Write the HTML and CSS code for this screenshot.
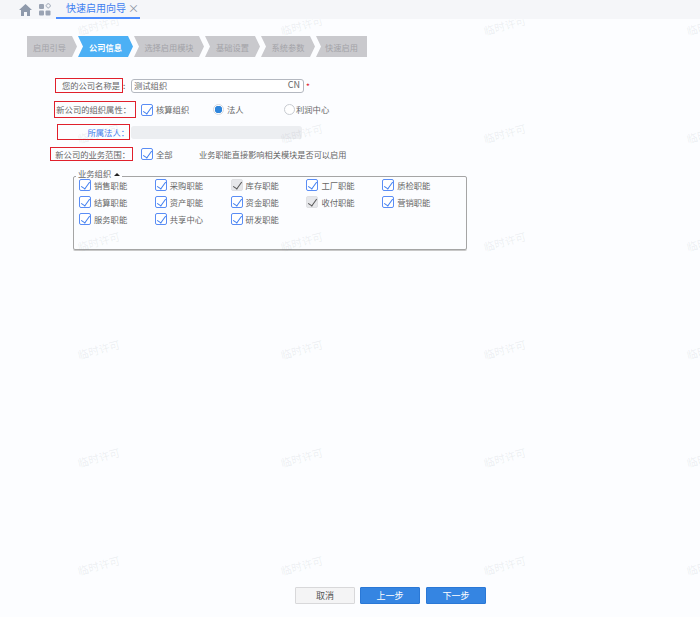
FILE: index.html
```html
<!DOCTYPE html>
<html lang="zh-CN">
<head>
    <meta charset="UTF-8">
    <meta name="viewport" content="width=device-width, initial-scale=1.0">
    <title>快速启用向导</title>
    <link rel="stylesheet" href="styles.css">
</head>
<body>
    <div class="topbar">
        <svg class="icon-home" width="13" height="12" viewBox="0 0 13 12"><path d="M6.5 0 0 6h2v6h3V8h3v4h3V6h2z" fill="#8e99ab"/></svg>
        <svg class="icon-apps" width="12" height="13" viewBox="0 0 12 13">
            <rect x="0" y="1" width="5" height="5" rx="1" fill="#9aa3b3"/>
            <rect x="7.5" y="1" width="3.5" height="3.5" rx="0.5" fill="none" stroke="#b4bbc7" transform="rotate(45 9.2 2.8)"/>
            <rect x="0" y="7.5" width="5" height="5" rx="1" fill="#9aa3b3"/>
            <rect x="6.5" y="7.5" width="5" height="5" rx="1" fill="#9aa3b3"/>
        </svg>
        <div class="tab">
            <span>快速启用向导</span>
            <span class="tab-close">×</span>
        </div>
    </div>

    <div class="steps">
        <div class="step step-first">启用引导</div>
        <div class="step step-active">公司信息</div>
        <div class="step step-wide">选择启用模块</div>
        <div class="step">基础设置</div>
        <div class="step step-fifth">系统参数</div>
        <div class="step step-last">快速启用</div>
    </div>

    <div class="form">
        <div class="row row-name">
            <label class="mark mark-name">您的公司名称是</label>
            <span class="colon">:</span>
            <div class="input-name"><span>测试组织</span><span class="lang">CN</span></div>
            <span class="required">*</span>
        </div>
        <div class="row row-attr">
            <label class="mark mark-attr">新公司的组织属性：</label>
            <span class="check"></span><span class="opt opt-calc">核算组织</span>
            <span class="radio radio-on"></span><span class="opt opt-legal">法人</span>
            <span class="radio"></span><span class="opt opt-profit">利润中心</span>
        </div>
        <div class="row row-legal">
            <label class="mark mark-legal">所属法人：</label>
            <div class="input-legal"></div>
        </div>
        <div class="row row-scope">
            <label class="mark mark-scope">新公司的业务范围：</label>
            <span class="check"></span><span class="opt opt-all">全部</span>
            <span class="hint">业务职能直接影响相关模块是否可以启用</span>
        </div>

        <fieldset class="group">
            <legend>业务组织 <span class="caret"></span></legend>
            <div class="group-grid">
                <div class="item"><span class="check"></span>销售职能</div>
                <div class="item"><span class="check"></span>采购职能</div>
                <div class="item"><span class="check check-off"></span>库存职能</div>
                <div class="item"><span class="check"></span>工厂职能</div>
                <div class="item"><span class="check"></span>质检职能</div>
                <div class="item"><span class="check"></span>结算职能</div>
                <div class="item"><span class="check"></span>资产职能</div>
                <div class="item"><span class="check"></span>资金职能</div>
                <div class="item"><span class="check check-off"></span>收付职能</div>
                <div class="item"><span class="check"></span>营销职能</div>
                <div class="item"><span class="check"></span>服务职能</div>
                <div class="item"><span class="check"></span>共享中心</div>
                <div class="item"><span class="check"></span>研发职能</div>
            </div>
        </fieldset>
    </div>

    <div class="footer">
        <button class="btn btn-cancel">取消</button>
        <button class="btn btn-blue">上一步</button>
        <button class="btn btn-blue">下一步</button>
    </div>

    <div class="watermarks">
        <span>临时许可</span><span>临时许可</span><span>临时许可</span><span>临时许可</span>
        <span>临时许可</span><span>临时许可</span><span>临时许可</span><span>临时许可</span>
        <span>临时许可</span><span>临时许可</span><span>临时许可</span><span>临时许可</span>
        <span>临时许可</span><span>临时许可</span><span>临时许可</span><span>临时许可</span>
        <span>临时许可</span><span>临时许可</span><span>临时许可</span><span>临时许可</span>
        <span>临时许可</span><span>临时许可</span><span>临时许可</span><span>临时许可</span>
    </div>
</body>
</html>
```

FILE: styles.css
```css
* {
    box-sizing: border-box;
}

html, body {
    height: 100%;
}

body {
    margin: 0;
    position: relative;
    overflow: hidden;
    display: flex;
    flex-direction: column;
    background-color: #fcfdff;
    font-family: "Noto Sans CJK SC", "Noto Sans", sans-serif;
    font-size: 8.3px;
    line-height: 12px;
    color: #666;
}

/* top bar */
.topbar {
    height: 19px;
    flex: none;
    position: relative;
    z-index: 2;
    display: flex;
    align-items: flex-start;
    background-color: #f5f6f9;
}

.icon-home {
    margin: 4px 0 0 19px;
}

.icon-apps {
    margin: 3px 0 0 7px;
}

.tab {
    width: 84px;
    height: 19px;
    margin-left: 5px;
    padding: 0 0 1px 10px;
    display: flex;
    align-items: center;
    gap: 2px;
    border-bottom: 2px solid #4d8dff;
    color: #3f7ef0;
    font-size: 10px;
}

.tab-close {
    color: #8a93a3;
    font-size: 11px;
}

/* steps */
.steps {
    flex: none;
    display: flex;
    gap: 1px;
    margin: 17px 0 0 27px;
}

.step {
    width: 55px;
    height: 21px;
    display: flex;
    align-items: center;
    justify-content: center;
    background-color: #c9c9cd;
    color: #a3a3a8;
    font-size: 8.2px;
    clip-path: polygon(0 0, calc(100% - 5px) 0, 100% 50%, calc(100% - 5px) 100%, 0 100%, 5px 50%);
}

.step-first {
    width: 50px;
    padding-right: 5px;
    clip-path: polygon(0 0, calc(100% - 5px) 0, 100% 50%, calc(100% - 5px) 100%, 0 100%);
}

.step-active {
    background-color: #4cb0f5;
    color: #fff;
    font-weight: bold;
}

.step-wide {
    width: 70px;
}

.step-fifth {
    width: 54px;
}

.step-last {
    width: 51px;
    clip-path: polygon(0 0, 100% 0, 100% 100%, 0 100%, 5px 50%);
}

/* form */
.form {
    flex: 1;
    padding-top: 21px;
}

.row {
    display: flex;
    align-items: center;
}

.mark {
    height: 15px;
    padding-bottom: 1px;
    display: flex;
    align-items: center;
    justify-content: flex-end;
    flex: none;
    border: 1.5px solid #e0202c;
    white-space: nowrap;
}

.row-name {
    height: 15px;
    padding-left: 55px;
}

.mark-name {
    width: 68px;
    padding-right: 2px;
}

.colon {
    width: 8px;
    flex: none;
    padding-bottom: 1px;
}

.input-name {
    width: 173px;
    height: 14px;
    padding: 0 3px 1px 2px;
    display: flex;
    justify-content: space-between;
    align-items: center;
    background-color: #fff;
    border: 1px solid #b4b8c0;
    border-radius: 3px;
}

.lang {
    font-size: 9px;
}

.required {
    margin-left: 2px;
    color: #e0202c;
}

.row-attr {
    height: 17px;
    margin-top: 8px;
    padding-left: 54px;
}

.mark-attr {
    width: 82px;
    height: 17px;
    padding-right: 4px;
}

.row-attr .check {
    margin-left: 5px;
}

.opt {
    margin-left: 3px;
    padding-bottom: 1px;
    white-space: nowrap;
}

.opt-calc {
    width: 57px;
}

.opt-legal {
    width: 57px;
}

.opt-profit {
    margin-left: 1px;
}

.row-legal {
    height: 16px;
    margin-top: 6px;
    padding-left: 57px;
}

.mark-legal {
    width: 73px;
    height: 16px;
    color: #3f7ef0;
}

.input-legal {
    width: 171px;
    height: 13px;
    margin-left: 1px;
    background-color: #eceef1;
    border-radius: 3px;
}

.row-scope {
    height: 14px;
    margin-top: 7px;
    padding-left: 50px;
}

.mark-scope {
    width: 83px;
    height: 14px;
    padding-right: 2px;
}

.row-scope .check {
    margin-left: 8px;
}

.opt-all {
    width: 43px;
}

.hint {
    padding-bottom: 1px;
    font-size: 8.2px;
    white-space: nowrap;
}

.check {
    width: 12px;
    height: 12px;
    flex: none;
    position: relative;
    display: inline-block;
    background-color: #fff;
    border: 1px solid #5a8df5;
    border-radius: 2px;
}

.check::after {
    content: "";
    position: absolute;
    left: 3px;
    top: 0;
    width: 4px;
    height: 8px;
    border-right: 1px solid #3f7ef0;
    border-bottom: 1px solid #3f7ef0;
    transform: rotate(35deg);
}

.check-off {
    background-color: #e6e7ea;
    border-color: #e0e1e4;
}

.check-off::after {
    border-color: #555;
}

.radio {
    width: 11px;
    height: 11px;
    flex: none;
    background-color: #fff;
    border: 1px solid #c8ccd2;
    border-radius: 50%;
}

.radio-on {
    border-color: #d5d9df;
    background: radial-gradient(circle, #2f86dc 0, #2f86dc 3.5px, #fff 4px);
}

/* business group */
.group {
    width: 394px;
    height: 82px;
    margin: 7px 0 0 73px;
    padding: 0 0 0 5px;
    border: 1px solid #a5a5a5;
    border-radius: 2px;
    box-shadow: 0 1px 0 #c8c8c8;
}

.group legend {
    padding: 0 2px 6px;
    margin-left: -3px;
    font-size: 8.3px;
    line-height: 10px;
}

.caret {
    display: inline-block;
    margin-left: 1px;
    vertical-align: 1px;
    border-left: 3px solid transparent;
    border-right: 3px solid transparent;
    border-bottom: 3px solid #222;
}

.group-grid {
    display: grid;
    grid-template-columns: repeat(5, 75.8px);
    grid-auto-rows: 17px;
    margin-top: -8px;
}

.item {
    display: flex;
    align-items: center;
    gap: 3px;
}

/* footer */
.footer {
    flex: none;
    display: flex;
    gap: 5px;
    padding: 0 0 13px 295px;
}

.btn {
    width: 60px;
    height: 17px;
    padding: 0;
    font-family: inherit;
    font-size: 9px;
    line-height: 1;
    border-radius: 1px;
}

.btn-cancel {
    background-color: #f4f4f5;
    border: 1px solid #d8d8da;
    color: #555;
}

.btn-blue {
    background-color: #3585e2;
    border: 1px solid #2a78d6;
    color: #fff;
}

.btn-blue:last-child {
    margin-left: 1px;
}

/* license watermark */
.watermarks {
    position: absolute;
    left: 0;
    top: 0;
    width: 100%;
    height: 100%;
    padding: 17px 0 0 77px;
    display: grid;
    grid-template-columns: repeat(4, 203px);
    grid-auto-rows: 108px;
    pointer-events: none;
}

.watermarks span {
    width: 43px;
    height: 16px;
    font-size: 10.8px;
    line-height: 16px;
    white-space: nowrap;
    color: rgba(120, 125, 140, 0.12);
    transform: rotate(-15deg);
}
```
